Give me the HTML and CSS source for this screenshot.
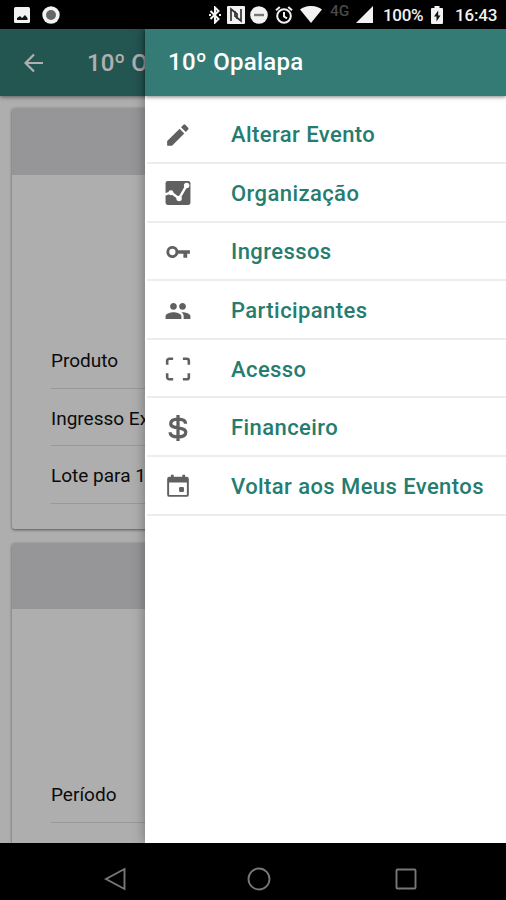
FILE: index.html
```html
<!DOCTYPE html>
<html lang="pt-BR">
<head>
  <meta charset="UTF-8">
  <meta name="viewport" content="width=device-width, initial-scale=1">
  <title>10º Opalapa</title>
  <link rel="stylesheet" href="styles.css">
</head>
<body>
  <div class="status-bar">
    <svg class="st-image" viewBox="0 0 16 16"><rect width="16" height="16" rx="1.5"/><path class="hole" d="M3 13v-2l3-2 2 2 3-3 2.5 3v2z"/></svg>
    <svg class="st-record" viewBox="0 0 18 18"><circle cx="9" cy="9" r="8.7"/><circle class="dot" cx="9" cy="9" r="5"/></svg>
    <svg class="st-bluetooth" viewBox="0 0 12 18"><path class="line" d="M1.5 5l8 8L6 16.5v-15L9.500 5l-8 8"/><path d="M0 8h2v2H0zM10 8h2v2h-2z"/></svg>
    <svg class="st-nfc" viewBox="0 0 18 18"><rect width="18" height="18" rx="1"/><path class="cut" d="M4 15V3l6 5v5M14 3v12L8 10V5"/></svg>
    <svg class="st-dnd" viewBox="0 0 18 18"><circle cx="9" cy="9" r="8.800"/><rect class="bar" x="4" y="7.800" width="10" height="2.400"/></svg>
    <svg class="st-alarm" viewBox="0 0 18 18"><circle class="line" cx="9" cy="10" r="6.800"/><path class="line" d="M9 6v4.500l3 1.800M1 4.300l3.800-3.200M17 4.300l-3.800-3.200"/></svg>
    <svg class="st-wifi" viewBox="0 0 22 17"><path d="M0 3.500C6.500-1.200 15.500-1.200 22 3.500L11 17z"/></svg>
    <span class="network">4G</span>
    <svg class="st-signal" viewBox="0 0 17 17"><path d="M0 17L17 0v17z"/></svg>
    <span class="percent">100%</span>
    <svg class="st-battery" viewBox="0 0 12 18"><path d="M3.500 0h5v2H11a1 1 0 0 1 1 1v14a1 1 0 0 1-1 1H1a1 1 0 0 1-1-1V3a1 1 0 0 1 1-1h2.500z"/><path class="hole" d="M7.200 4.500L3 10.500h2.500V15.500l4-6H7.200z"/></svg>
    <span class="clock">16:43</span>
  </div>

  <div class="app">
    <div class="page">
      <div class="toolbar">
        <svg class="back" viewBox="0 0 20 20"><path d="M19 10H2M10 1.500L1.500 10l8.500 8.500"/></svg>
        <span>10º Opalapa</span>
      </div>
      <div class="content">
        <div class="card card-lote">
          <div class="card-header"></div>
          <div class="list">
            <div class="row">Produto</div>
            <div class="row">Ingresso Extra</div>
            <div class="row">Lote para 10</div>
          </div>
        </div>
        <div class="card card-periodo">
          <div class="card-header"></div>
          <div class="list">
            <div class="row">Período</div>
          </div>
        </div>
      </div>
    </div>

    <div class="backdrop"></div>

    <div class="menu">
      <div class="menu-header">10º Opalapa</div>
      <div class="menu-list">
        <div class="item">
          <svg viewBox="0 0 24 24"><path d="M2 17.500V22h4.500L17.810 10.500l-4.300-4.300L2 17.500zM21.400 7a1.200 1.200 0 0 0 0-1.700l-2.700-2.700a1.200 1.200 0 0 0-1.700 0l-2.200 2.200 4.400 4.400z"/></svg>
          <span>Alterar Evento</span>
        </div>
        <div class="item">
          <svg viewBox="0 0 24 24"><rect x="0.500" y="1" width="23" height="22" rx="2"/><path class="chart" d="M0 13.500l5.500-2 7.500 5.500 7-12"/><g class="points"><circle cx="5.500" cy="11.800" r="2.300"/><circle cx="13" cy="17" r="2.500"/><circle cx="20" cy="5" r="2.500"/></g></svg>
          <span>Organização</span>
        </div>
        <div class="item">
          <svg viewBox="0 0 24 24"><path fill-rule="evenodd" d="M12.200 10.400a5.600 5.600 0 1 0 0 3.200H17v3.600h3.500v-3.600H23v-3.200zM6.800 14.900a2.900 2.900 0 1 1 0-5.800 2.900 2.900 0 0 1 0 5.800z"/></svg>
          <span>Ingressos</span>
        </div>
        <div class="item">
          <svg viewBox="0.5 0.5 23 23"><path d="M16 11c1.660 0 2.990-1.340 2.990-3S17.660 5 16 5s-3 1.340-3 3 1.340 3 3 3zm-8 0c1.660 0 2.990-1.340 2.990-3S9.660 5 8 5 5 6.340 5 8s1.340 3 3 3zm0 2c-2.330 0-7 1.170-7 3.500V19h14v-2.500c0-2.330-4.670-3.500-7-3.500zm8 0c-.29 0-.62.020-.97.050 1.160.84 1.970 1.970 1.970 3.450V19h6v-2.500c0-2.330-4.670-3.500-7-3.500z"/></svg>
          <span>Participantes</span>
        </div>
        <div class="item">
          <svg viewBox="0 0 24 24"><path class="frame" d="M2 8V4.500a2 2 0 0 1 2-2H7.500M16.500 2.500H20a2 2 0 0 1 2 2V8M22 16v3.500a2 2 0 0 1-2 2H16.500M7.500 21.500H4a2 2 0 0 1-2-2V16"/></svg>
          <span>Acesso</span>
        </div>
        <div class="item">
          <svg viewBox="0 0 24 24"><path class="dollar" d="M19 8c0-3-3-4.200-7-4.200S5.300 5.200 5.300 8c0 5.500 13.900 2.400 13.900 8 0 3-3.200 4.300-7.200 4.300S4.700 19 4.700 16M12 0v24"/></svg>
          <span>Financeiro</span>
        </div>
        <div class="item">
          <svg viewBox="0 0 24 24"><path fill-rule="evenodd" d="M20 3.500h-1.500v-2H16v2H8v-2H5.500v2H4a2 2 0 0 0-2 2V20a2 2 0 0 0 2 2h16a2 2 0 0 0 2-2V5.500a2 2 0 0 0-2-2zM20.200 20.200H3.800V8.800h16.400z"/><rect x="13" y="13" width="4.500" height="4.500" rx="1"/></svg>
          <span>Voltar aos Meus Eventos</span>
        </div>
      </div>
    </div>
  </div>

  <div class="nav-bar">
    <svg viewBox="0 0 24 24"><path d="M20.500 2v20L2 12z"/></svg>
    <svg class="home" viewBox="0 0 24 24"><circle cx="12" cy="12" r="10.500"/></svg>
    <svg viewBox="0 0 24 24"><rect x="2.500" y="2.500" width="19" height="19" rx="1"/></svg>
  </div>
</body>
</html>
```
FILE: styles.css
```css
* {
  box-sizing: border-box;
}
body {
  margin: 0;
  height: 900px;
  display: flex;
  flex-direction: column;
  overflow: hidden;
  background-color: #000;
  font-family: Roboto, sans-serif;
}
svg {
  display: block;
  flex: none;
}

/* Android status bar */
.status-bar {
  height: 29px;
  flex: none;
  display: flex;
  align-items: center;
  padding-left: 14px;
  color: #f2f2f2;
  font-size: 17px;
  font-weight: 500;
  line-height: 29px;
  white-space: nowrap;
}
.status-bar svg {
  fill: #f2f2f2;
}
.status-bar span {
  flex: none;
}
.status-bar .hole {
  fill: #111;
}
.status-bar .bar {
  fill: #777;
}
.status-bar .dot {
  fill: #666;
}
.status-bar .line {
  fill: none;
  stroke: #f2f2f2;
  stroke-width: 2;
}
.status-bar .cut {
  fill: none;
  stroke: #333;
  stroke-width: 1.7;
}
.st-image {
  width: 16px;
  height: 16px;
}
.st-record {
  width: 18px;
  height: 18px;
  margin-left: 12px;
}
.st-bluetooth {
  width: 12px;
  height: 18px;
  margin-left: 149px;
}
.st-nfc {
  width: 18px;
  height: 18px;
  margin-left: 6px;
}
.st-dnd {
  width: 18px;
  height: 18px;
  margin-left: 5px;
}
.st-alarm {
  width: 18px;
  height: 18px;
  margin-left: 7px;
}
.st-wifi {
  width: 22px;
  height: 17px;
  margin-left: 7px;
}
.status-bar .network {
  width: 34px;
  padding-left: 8px;
  padding-bottom: 7px;
  color: #484848;
  font-size: 15.5px;
  line-height: 21px;
}
.st-signal {
  width: 17px;
  height: 17px;
}
.status-bar .percent {
  width: 58px;
  padding-top: 2px;
  padding-left: 10px;
  letter-spacing: -0.3px;
}
.st-battery {
  width: 12px;
  height: 18px;
}
.status-bar .clock {
  padding-top: 2px;
  padding-left: 12px;
  letter-spacing: -0.2px;
}

.app {
  position: relative;
  height: 814px;
  flex: none;
  overflow: hidden;
}

/* page under the menu */
.page {
  height: 100%;
  background-color: #fcfcfc;
}
.toolbar {
  height: 67px;
  display: flex;
  align-items: center;
  gap: 43px;
  padding-left: 24px;
  background-color: #347b76;
  box-shadow: 0 1px 4px rgba(0, 0, 0, 0.5);
  color: #fff;
  font-size: 24px;
  font-weight: 500;
}
.back {
  width: 20px;
  height: 20px;
  fill: none;
  stroke: #fff;
  stroke-width: 2.2;
}
.content {
  padding: 12px;
}
.card {
  display: flex;
  flex-direction: column;
  justify-content: space-between;
  margin-bottom: 14px;
  overflow: hidden;
  background-color: #fcfcfc;
  border-radius: 3px;
  box-shadow: 0 1px 3px rgba(0, 0, 0, 0.5);
}
.card-lote {
  height: 421px;
  padding-bottom: 25px;
}
.card-periodo {
  height: 421px;
  padding-bottom: 141px;
}
.card-header {
  height: 67px;
  background-color: #dadadd;
}
.card-periodo .card-header {
  height: 66px;
}
.list {
  padding-left: 39px;
}
.row {
  height: 57.7px;
  border-bottom: 1px solid #dedede;
  font-size: 19px;
  line-height: 60px;
  color: #111;
}
.backdrop {
  position: absolute;
  inset: 0;
  background-color: rgba(0, 0, 0, 0.31);
}

/* side menu */
.menu {
  position: absolute;
  top: 0;
  right: 0;
  width: 361px;
  height: 100%;
  background-color: #fff;
  box-shadow: 0 0 12px rgba(0, 0, 0, 0.35);
}
.menu-header {
  height: 67px;
  padding-left: 23px;
  background-color: #347b76;
  box-shadow: 0 1px 4px rgba(0, 0, 0, 0.5);
  color: #fff;
  font-size: 24px;
  font-weight: 500;
  line-height: 67px;
  letter-spacing: 0.25px;
}
.menu-list {
  padding: 9.5px 0 0 2px;
}
.item {
  height: 58.6px;
  display: flex;
  align-items: center;
  gap: 40px;
  padding-top: 2px;
  padding-left: 18px;
  border-bottom: 2px solid #ededed;
  color: #257c70;
  font-size: 22px;
  font-weight: 500;
  letter-spacing: 0.42px;
  white-space: nowrap;
}
.item svg {
  width: 26px;
  height: 26px;
  fill: #606060;
}
.item .chart {
  fill: none;
  stroke: #fff;
  stroke-width: 2.2;
}
.item .points {
  fill: #fff;
}
.item .frame,
.item .dollar {
  fill: none;
  stroke: #606060;
  stroke-width: 2.4;
}
.item .dollar {
  stroke-width: 3;
}

/* Android navigation bar */
.nav-bar {
  height: 57px;
  flex: none;
  display: flex;
  align-items: center;
  justify-content: space-between;
  padding: 14px 88px 0 104px;
}
.nav-bar svg {
  width: 24px;
  height: 24px;
  fill: none;
  stroke: #777;
  stroke-width: 1.9;
}
.nav-bar .home {
  margin-right: 4px;
}
```
